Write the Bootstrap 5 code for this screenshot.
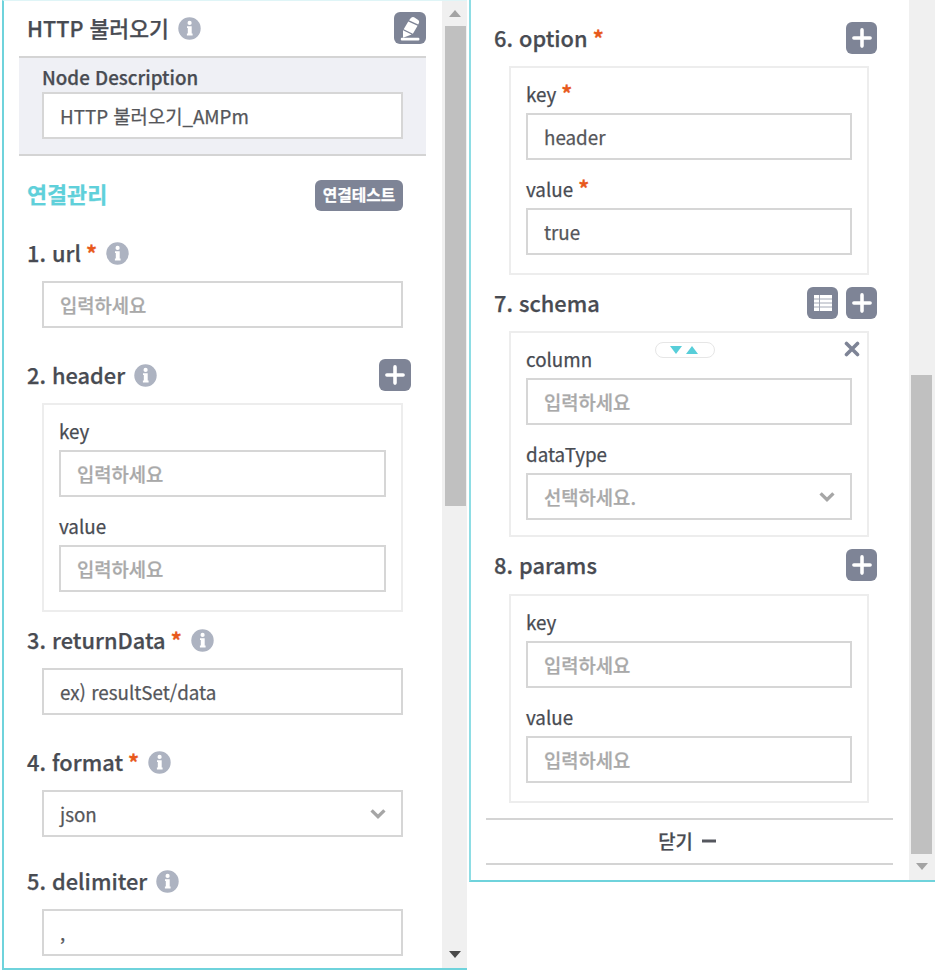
<!DOCTYPE html>
<html lang="ko">
<head>
<meta charset="utf-8">
<meta name="viewport" content="width=device-width, initial-scale=1">
<title>HTTP 불러오기</title>
<link href="https://cdn.jsdelivr.net/npm/bootstrap@5.3.0/dist/css/bootstrap.min.css" rel="stylesheet">
<style>
body{font-family:"Noto Sans CJK KR","Noto Sans",sans-serif;background:#fff;color:#484b52;width:935px;height:973px;overflow:hidden;-webkit-text-stroke:.25px}
.panel{border-style:solid;border-color:#6fd3dc;border-width:1px 0 2px 2px;border-top-color:#dff5f7}
.panel-left{width:465px;height:970px;margin-left:2px}
.panel-right{width:466px;height:882px;margin-left:2px;border-top:0;border-left-color:#8edde4}
.pane-left{padding:0 16px 0 15px}
.pane-right{padding:18px 16px 0 15px}
.title-row{height:54px;padding:0 0 0 8px;margin-bottom:1px}
.desc{height:100px;background:#eff0f5;border-top:2px solid #d4d4d4;border-bottom:2px solid #d4d4d4;padding:6px 23px 0}
.desc-label{font-size:18.8px;font-weight:500;line-height:26px;height:28px}
.group-row{height:78px;padding:0 23px 0 8px}
.group-name{color:#5fd0da;font-size:21.8px;font-weight:700;line-height:30px;padding-bottom:2px}
.sec{height:40px;margin:27px 15px 8px 8px;font-size:21.8px;font-weight:500;line-height:40px;white-space:pre}
.title-row .sec{font-size:21.6px}
.pane-left .sec.first{margin-top:-1px}
.pane-left .sec.tight{margin-top:24px}
.pane-right .sec{margin-right:16px;margin-left:8px}
.sec.near{margin-top:8px}
.sec.far{margin-bottom:9px}
.req{color:#e8591c;font-weight:700;margin-left:-1px}
.lab .req{font-size:21.6px;line-height:20px}
.info-icon{margin-left:9px}
.indent{margin-left:23px;margin-right:23px}
.pane-right .indent{margin-right:24px}
.field{height:47px;border:2px solid #d6d6d6;border-radius:0;background:#fff;padding:0 16px 1px;font-size:18.8px;line-height:42px;color:#55565a;box-shadow:none;-webkit-text-stroke:.25px}
.field::placeholder{color:#a9a9a9;opacity:1;font-weight:500}
.field.ph{color:#a9a9a9;font-weight:500}
.field.pick{padding:1px 15px 0 16px}
.group-box{height:209px;border:2px solid #ededed;padding:0 15px;position:relative}
.group-box .lab{font-size:18.8px;line-height:26px;height:26px;margin:13px 0 6px}
.group-box .field + .lab{margin:16px 0 6px}
.group-box.short{height:206px}
.sq{width:32px;height:32px;border-radius:6px;background:#7e8496;border:0;padding:0;display:flex;align-items:center;justify-content:center}
.pane-right .sq{width:31px}
.sq-next{margin-left:8px}
.test-btn{width:88px;height:31px;border-radius:6px;background:#7e8496;border:0;color:#fff;font-size:15.8px;font-weight:700;line-height:30px;padding:0}
.track{width:25px;background:#f0f0f0;padding:0 2px 0 3px}
.track-right{width:26px;padding:0 3px 0 2px}
.thumb{background:#c0c0c0;width:21px}
.cell-up{height:25px}
.cell-down{padding-bottom:10px}
.thumb-left{height:480px}
.thumb-right{margin-top:375px;height:479px}
.pill{position:absolute;left:144px;top:9px;width:60px;height:16px;border:1px solid #e6e6e6;border-radius:8px;background:#fff;padding-right:2px}
.x-btn{position:absolute;right:7px;top:8px;width:16px;height:16px;line-height:0}
.close-row{height:47px;border-top:2px solid #d4d4d4;border-bottom:2px solid #d4d4d4;margin-top:15px;padding-right:4px;padding-bottom:1px;font-size:18.8px;font-weight:500}
svg{display:block;flex:none}
</style>
</head>
<body>
<svg width="0" height="0" class="position-absolute">
  <symbol id="info" viewBox="0 0 23 23"><circle cx="11.5" cy="11.5" r="11.2" fill="#adb3c1"/><circle cx="11.600" cy="5.900" r="2.100" fill="#fff"/><path d="M9 9.200h4.700v7.400h.9v1.900H8.900v-1.900h.9v-5.500H9z" fill="#fff"/></symbol>
  <symbol id="plus" viewBox="0 0 18 18"><path d="M9 1.700v14.600M1.700 9h14.600" stroke="#fff" stroke-width="3.200" stroke-linecap="round"/></symbol>
  <symbol id="chev" viewBox="0 0 16 12"><path d="M1.600 2.400L8 8.600l6.400-6.200" fill="none" stroke="#a6a6a6" stroke-width="3.400"/></symbol>
</svg>
<main class="d-flex align-items-start">
  <section class="panel panel-left d-flex">
    <div class="pane-left flex-grow-1">
      <div class="title-row d-flex align-items-center justify-content-between">
        <div class="sec m-0 d-flex align-items-center">HTTP 불러오기<svg class="info-icon" width="23" height="23"><use href="#info"/></svg></div>
        <button class="sq" aria-label="edit"><svg width="32" height="32" viewBox="0 0 32 32"><g fill="#fff"><path d="M15.700 7.600Q17.200 4.200 20.100 5.300L23.500 7.400Q26 8.900 24.700 11.500L24.200 12.500L15 8.300z"/><path d="M14.300 9.500l9.300 4.200-4.700 8.100-9.200-4.500z"/><path d="M9 18.300l8.600 4.200-7.800 3.100q-.8.200-.8-.6z"/><rect x="6.800" y="25.800" width="18.600" height="2.800" rx="1"/></g></svg></button>
      </div>
      <div class="desc">
        <div class="desc-label">Node Description</div>
        <input class="field form-control" value="HTTP 불러오기_AMPm">
      </div>
      <div class="group-row d-flex align-items-center justify-content-between">
        <div class="group-name">연결관리</div>
        <button class="test-btn">연결테스트</button>
      </div>
      <div class="sec first d-flex align-items-center">1. url<span class="req"> *</span><svg class="info-icon" width="23" height="23"><use href="#info"/></svg></div>
      <div class="indent"><input class="field form-control" placeholder="입력하세요"></div>
      <div class="sec d-flex align-items-center">2. header<svg class="info-icon" width="23" height="23"><use href="#info"/></svg><button class="sq ms-auto" aria-label="add"><svg width="20" height="20"><use href="#plus"/></svg></button></div>
      <div class="group-box indent">
        <div class="lab">key</div><input class="field form-control" placeholder="입력하세요">
        <div class="lab">value</div><input class="field form-control" placeholder="입력하세요">
      </div>
      <div class="sec near d-flex align-items-center">3. returnData<span class="req"> *</span><svg class="info-icon" width="23" height="23"><use href="#info"/></svg></div>
      <div class="indent"><input class="field form-control" value="ex) resultSet/data"></div>
      <div class="sec d-flex align-items-center">4. format<span class="req"> *</span><svg class="info-icon" width="23" height="23"><use href="#info"/></svg></div>
      <div class="indent"><div class="field pick d-flex align-items-center justify-content-between">json<svg width="16" height="12"><use href="#chev"/></svg></div></div>
      <div class="sec tight d-flex align-items-center">5. delimiter<svg class="info-icon" width="23" height="23"><use href="#info"/></svg></div>
      <div class="indent"><input class="field form-control" value=","></div>
    </div>
    <div class="track d-flex flex-column">
      <div class="cell-up d-flex justify-content-center align-items-center"><svg width="12" height="7"><path d="M0 7L6 0l6 7z" fill="#a3a3a3"/></svg></div>
      <div class="thumb thumb-left"></div>
      <div class="cell-down mt-auto d-flex justify-content-center"><svg width="12" height="7"><path d="M0 0h12L6 7z" fill="#4a4a4a"/></svg></div>
    </div>
  </section>
  <section class="panel panel-right d-flex">
    <div class="pane-right flex-grow-1">
      <div class="sec mt-0 d-flex align-items-center">6. option<span class="req"> *</span><button class="sq ms-auto" aria-label="add"><svg width="20" height="20"><use href="#plus"/></svg></button></div>
      <div class="group-box indent">
        <div class="lab">key<span class="req"> *</span></div><input class="field form-control" value="header">
        <div class="lab">value<span class="req"> *</span></div><input class="field form-control" value="true">
      </div>
      <div class="sec near d-flex align-items-center">7. schema<button class="sq ms-auto" aria-label="list"><svg width="20" height="18" viewBox="0 0 20 18"><rect x="1" y="1" width="18" height="16" fill="#fff"/><path d="M1 5h18M1 9h18M1 13h18M6.500 1v16" stroke="#a4a9b6" stroke-width="1"/></svg></button><button class="sq sq-next" aria-label="add"><svg width="20" height="20"><use href="#plus"/></svg></button></div>
      <div class="group-box short indent">
        <div class="pill d-flex align-items-center justify-content-center gap-1"><svg width="12" height="8"><path d="M0 0h12L6 8z" fill="#57ced9"/></svg><svg width="12" height="8"><path d="M0 8h12L6 0z" fill="#57ced9"/></svg></div>
        <div class="x-btn"><svg width="16" height="16"><path d="M2.500 2.500l11 11M13.500 2.500l-11 11" stroke="#7e8496" stroke-width="3.600" stroke-linecap="round"/></svg></div>
        <div class="lab">column</div><input class="field form-control" placeholder="입력하세요">
        <div class="lab">dataType</div><div class="field pick ph d-flex align-items-center justify-content-between">선택하세요.<svg width="16" height="12"><use href="#chev"/></svg></div>
      </div>
      <div class="sec near far d-flex align-items-center">8. params<button class="sq ms-auto" aria-label="add"><svg width="20" height="20"><use href="#plus"/></svg></button></div>
      <div class="group-box indent">
        <div class="lab">key</div><input class="field form-control" placeholder="입력하세요">
        <div class="lab">value</div><input class="field form-control" placeholder="입력하세요">
      </div>
      <div class="close-row d-flex align-items-center justify-content-center">닫기<svg class="ms-2" width="16" height="4"><path d="M1 2h14" stroke="#55575e" stroke-width="3"/></svg></div>
    </div>
    <div class="track track-right d-flex flex-column">
      <div class="thumb thumb-right"></div>
      <div class="cell-down mt-auto d-flex justify-content-center"><svg width="12" height="7"><path d="M0 0h12L6 7z" fill="#a3a3a3"/></svg></div>
    </div>
  </section>
</main>
<script src="https://cdn.jsdelivr.net/npm/bootstrap@5.3.0/dist/js/bootstrap.bundle.min.js"></script>
</body>
</html>
